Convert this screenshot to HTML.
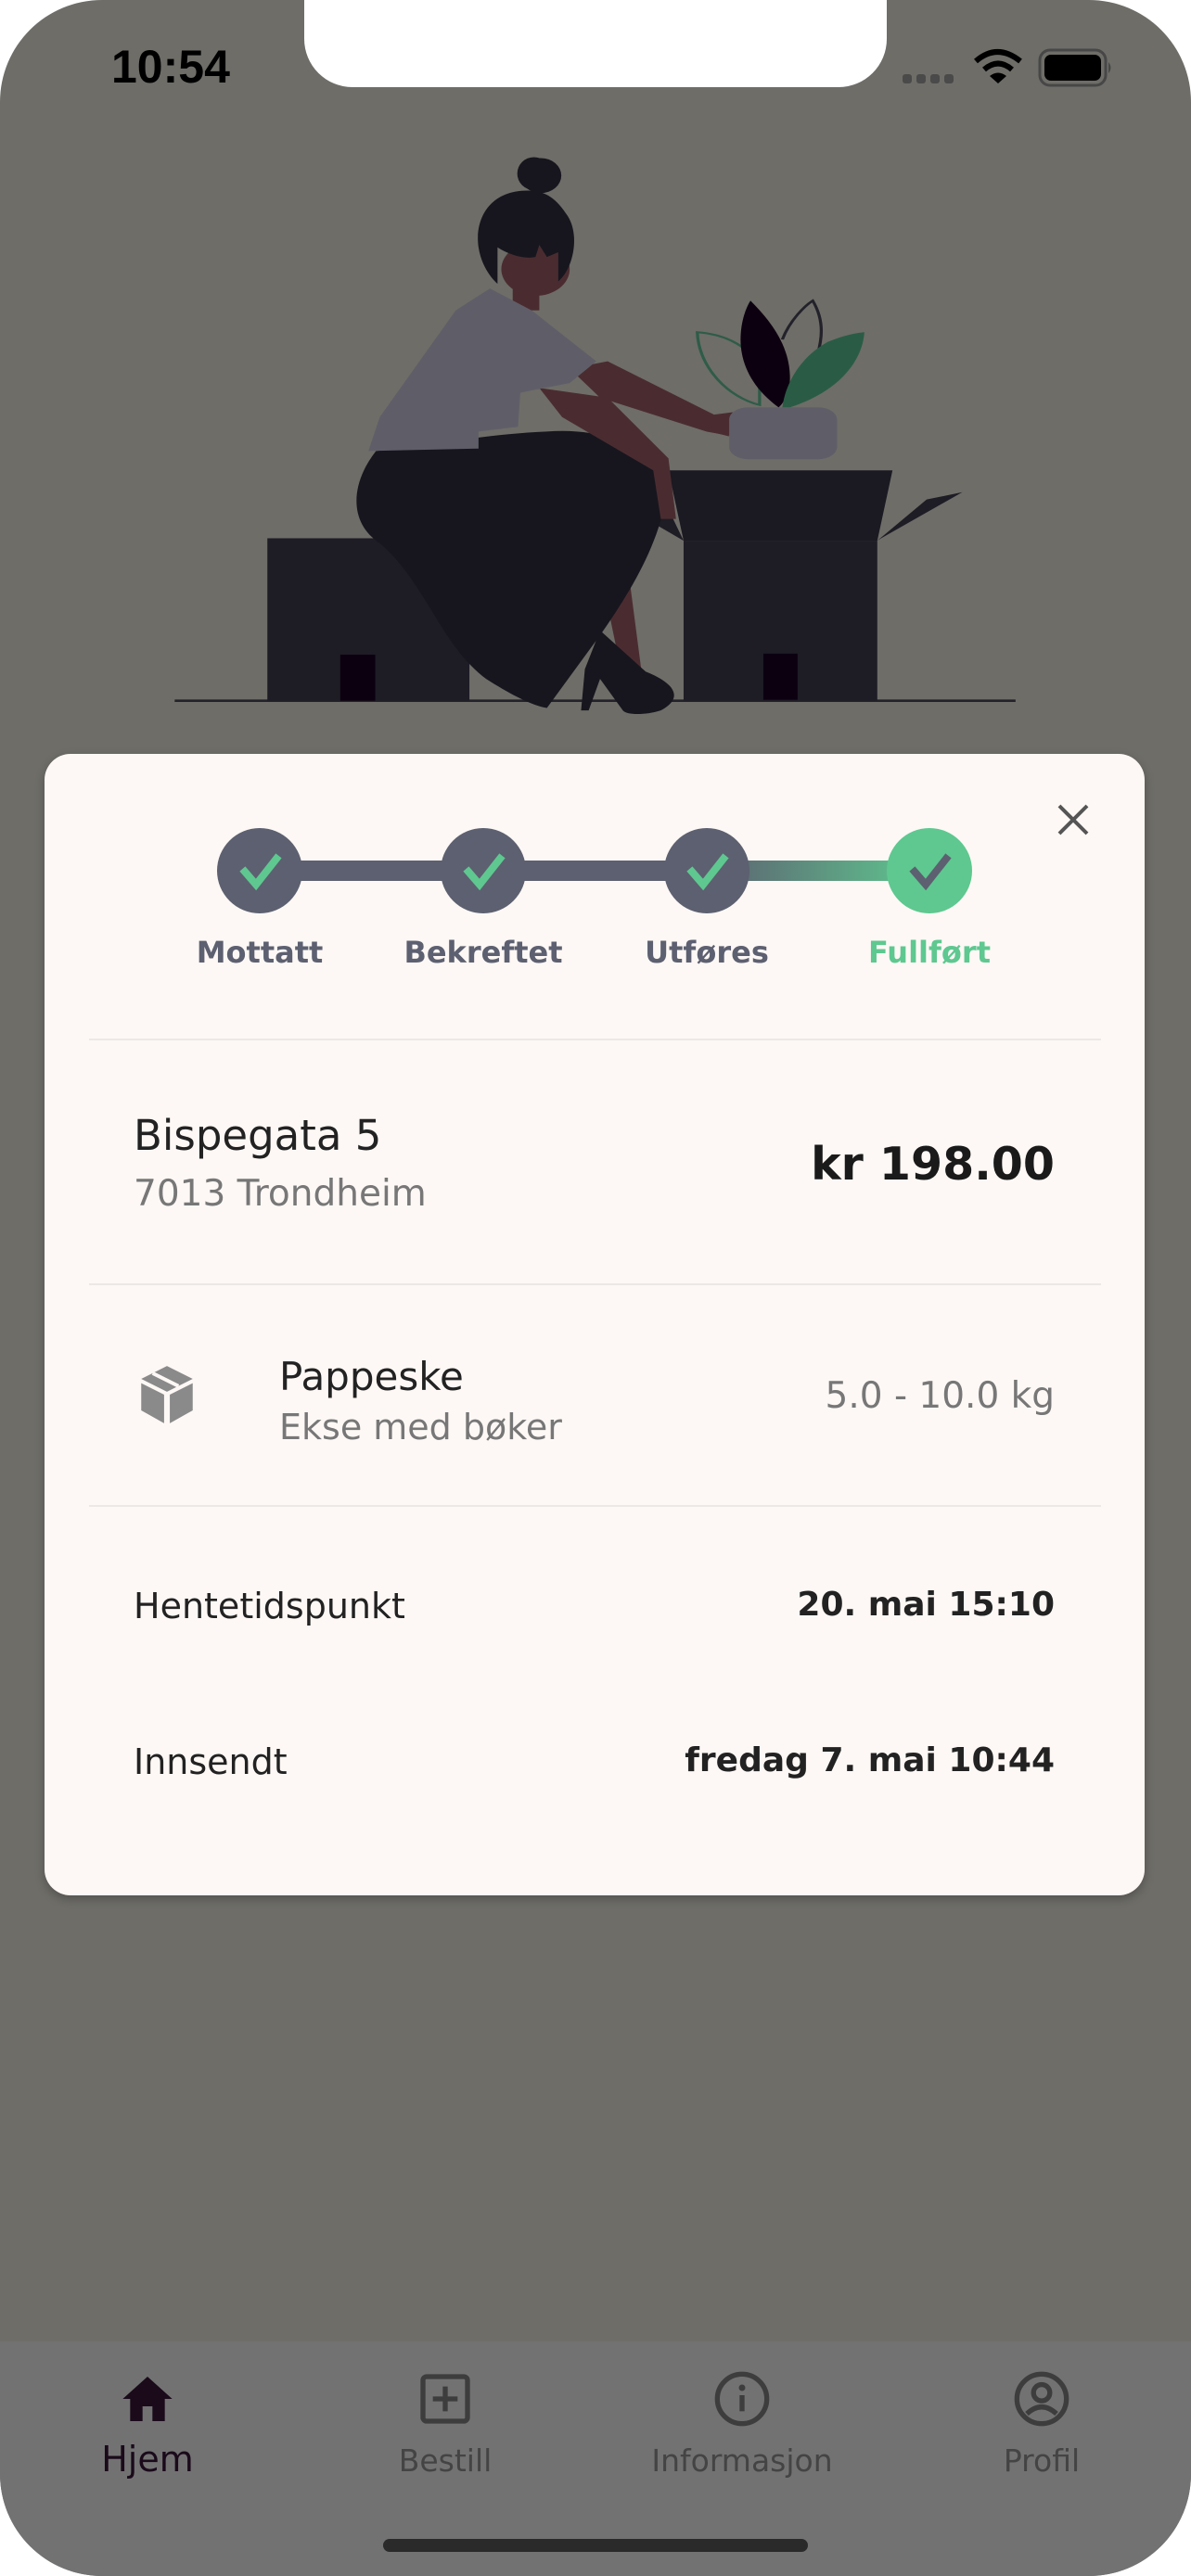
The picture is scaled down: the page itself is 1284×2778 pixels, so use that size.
<!DOCTYPE html>
<html><head><meta charset="utf-8"><style>
*{margin:0;padding:0;box-sizing:border-box}
html,body{width:1284px;height:2778px;background:#fff;overflow:hidden;font-family:"DejaVu Sans",sans-serif}
#screen{position:absolute;left:0;top:0;width:1284px;height:2778px;background:#6e6d68;border-radius:110px;overflow:hidden}
#notch{position:absolute;left:328px;top:-10px;width:628px;height:104px;background:#fff;border-radius:0 0 52px 52px}
.t{position:absolute;white-space:nowrap;line-height:1}
#card{position:absolute;left:48px;top:813px;width:1186px;height:1231px;background:#fdf8f5;border-radius:28px;box-shadow:0 4px 10px rgba(0,0,0,.25)}
.div{position:absolute;left:48px;width:1091px;height:2px;background:#ece8e5}
#tab{position:absolute;left:0;top:2525px;width:1284px;height:253px;background:#727272}
.lab{position:absolute;top:2634px;font-size:33px;color:#444;transform:translateX(-50%)}
.st{font-size:32px;font-weight:bold;color:#5d6070;transform:translateX(-50%);top:198px}
</style></head><body>
<div id="screen">
<div id="notch"></div>
<div class="t" style="left:120px;top:47px;font-size:50px;font-weight:bold;color:#000;font-family:'Liberation Sans',sans-serif">10:54</div>
<svg style="position:absolute;left:960px;top:45px" width="240" height="60" viewBox="960 45 240 60">
<rect x="973" y="80" width="10" height="10" rx="3" fill="#4a4a4a"/><rect x="988" y="80" width="10" height="10" rx="3" fill="#4a4a4a"/><rect x="1003" y="80" width="10" height="10" rx="3" fill="#4a4a4a"/><rect x="1018" y="80" width="10" height="10" rx="3" fill="#4a4a4a"/>
<path d="M1052 66 Q1075 46 1100 66" stroke="#000" stroke-width="6" fill="none"/>
<path d="M1061 75 Q1076 62 1091 75" stroke="#000" stroke-width="6" fill="none"/>
<path d="M1067 82 L1076 90 L1085 82 Q1076 75 1067 82Z" fill="#000"/>
<rect x="1121" y="54" width="71" height="38" rx="11" fill="none" stroke="#474747" stroke-width="3"/>
<rect x="1126" y="59" width="61" height="28" rx="7" fill="#000"/>
<path d="M1195 67 Q1200 73 1195 79Z" fill="#474747"/>
</svg>
<svg style="position:absolute;left:0;top:0" width="1284" height="820" viewBox="0 0 1568 1568" preserveAspectRatio="none">
<line x1="230" y1="1445" x2="1337" y2="1445" stroke="#23212a" stroke-width="5"/>
<rect x="352" y="1110" width="266" height="335" fill="#1e1c25"/>
<rect x="448" y="1350" width="46" height="95" fill="#0c0010"/>
<path d="M790 1015 L880 1050 L900 1115 Z" fill="#1e1c25"/>
<path d="M1155 1115 L1220 1030 L1267 1015 L1160 1110Z" fill="#1e1c25"/>
<rect x="900" y="1115" width="255" height="330" fill="#1e1c25"/>
<path d="M880 970 L1175 970 L1155 1115 L900 1115Z" fill="#1b1922"/>
<rect x="1005" y="1348" width="45" height="95" fill="#0c0010"/>
<path d="M830 1210 L845 1390 L820 1400 L800 1250Z" fill="#4a2c30"/>
<path d="M495 930 C460 1000 460 1080 500 1120 C560 1200 580 1330 640 1400 C670 1430 700 1455 720 1460 L790 1310 C830 1220 870 1120 880 1000 C870 930 800 880 720 890 C640 895 560 920 495 930Z" fill="#17161e"/>
<path d="M790 1300 L850 1385 C890 1410 900 1440 870 1465 C850 1475 825 1475 820 1465 L790 1400 L775 1465 L765 1465 L770 1380Z" fill="#17161e"/>
<path d="M710 800 L800 820 L945 870 L960 900 L935 890 L800 820 L880 945 L890 1070 L870 1070 L860 970 L740 860Z" fill="#4a2c30"/>
<path d="M750 760 L800 745 L940 855 L965 850 L965 900 L930 890 L790 820Z" fill="#4a2c30"/>
<ellipse cx="705" cy="555" rx="45" ry="55" fill="#4a2c30"/>
<rect x="675" y="590" width="35" height="50" fill="#4a2c30"/>
<path d="M645 595 L700 640 L785 745 L750 790 L700 805 L685 810 L682 880 L630 890 L630 925 L485 930 L500 860 L600 640Z" fill="#5f5e68"/>
<ellipse cx="712" cy="362" rx="27" ry="36" fill="#17161e"/>
<ellipse cx="703" cy="358" rx="22" ry="34" fill="#17161e"/>
<path d="M695 393 C640 393 625 460 630 510 C635 560 655 585 655 585 L655 510 C670 525 690 535 705 530 L710 505 L720 530 L735 520 L735 580 C755 555 765 480 745 440 C730 405 715 393 695 393Z" fill="#17161e"/>
<rect x="960" y="840" width="142" height="107" rx="25" fill="#5f5e68"/>
<path d="M918 685 C960 690 990 720 1000 760 L1000 835 C960 820 920 760 918 685Z" fill="none" stroke="#2e5c48" stroke-width="4"/>
<path d="M1030 700 C1040 660 1060 630 1070 620 C1085 660 1085 700 1070 760" fill="none" stroke="#23212a" stroke-width="4"/>
<path d="M988 620 C1020 670 1040 720 1040 780 C1040 810 1030 835 1025 840 C990 800 975 750 975 700 C975 670 980 640 988 620Z" fill="#0c0010"/>
<path d="M1138 685 C1135 750 1100 810 1040 840 L1030 840 C1035 780 1060 730 1090 705 C1105 695 1120 688 1138 685Z" fill="#2a5c45"/>
</svg>
<div id="card">
<svg style="position:absolute;left:0;top:0" width="1186" height="200" viewBox="48 813 1186 200">
<defs><linearGradient id="g" x1="0" x2="1"><stop offset="0" stop-color="#5d6070"/><stop offset="1" stop-color="#5ec890"/></linearGradient></defs>
<rect x="280" y="928" width="482" height="22" fill="#5d6070"/>
<rect x="762" y="928" width="240" height="22" fill="url(#g)"/>
<circle cx="280" cy="939" r="46" fill="#5d6070"/><circle cx="521" cy="939" r="46" fill="#5d6070"/><circle cx="762" cy="939" r="46" fill="#5d6070"/><circle cx="1002" cy="939" r="46" fill="#5ec890"/>
<g fill="none" stroke-width="8" stroke-linecap="square"><path d="M264 940 L276 954 L298 926" stroke="#5ec890"/><path d="M505 940 L517 954 L539 926" stroke="#5ec890"/><path d="M746 940 L758 954 L780 926" stroke="#5ec890"/><path d="M986 940 L998 954 L1020 926" stroke="#5d6070"/></g>
<path d="M1142 869 L1172 899 M1172 869 L1142 899" stroke="#555" stroke-width="4"/>
</svg>
<div class="t st" style="left:232px">Mottatt</div>
<div class="t st" style="left:473px">Bekreftet</div>
<div class="t st" style="left:714px">Utføres</div>
<div class="t st" style="left:954px;color:#5ec890">Fullført</div>
<div class="div" style="top:307px"></div>
<div class="t" style="left:96px;top:389px;font-size:45px;color:#222">Bispegata 5</div>
<div class="t" style="left:96px;top:455px;font-size:39px;color:#777">7013 Trondheim</div>
<div class="t" style="right:97px;top:418px;font-size:49px;font-weight:bold;color:#1a1a1a">kr 198.00</div>
<div class="div" style="top:571px"></div>
<svg style="position:absolute;left:95px;top:654px" width="74" height="74" viewBox="0 0 24 24"><path d="M12 2 L21 6.5 L12 11 L3 6.5Z" fill="#8a8a8a"/><path d="M3 8 L11 12 L11 22 L3 17.5Z M21 8 L13 12 L13 22 L21 17.5Z" fill="#8a8a8a"/><path d="M7 4.5 L16 9" stroke="#fdf8f5" stroke-width="1.3"/></svg>
<div class="t" style="left:253px;top:651px;font-size:42px;color:#222">Pappeske</div>
<div class="t" style="left:253px;top:707px;font-size:38px;color:#777">Ekse med bøker</div>
<div class="t" style="right:97px;top:673px;font-size:39px;color:#777">5.0 - 10.0 kg</div>
<div class="div" style="top:810px"></div>
<div class="t" style="left:96px;top:900px;font-size:38px;color:#222">Hentetidspunkt</div>
<div class="t" style="right:97px;top:900px;font-size:36px;font-weight:bold;color:#222">20. mai 15:10</div>
<div class="t" style="left:96px;top:1068px;font-size:38px;color:#222">Innsendt</div>
<div class="t" style="right:97px;top:1068px;font-size:36px;font-weight:bold;color:#222">fredag 7. mai 10:44</div>
</div>
<div id="tab"></div>
<svg style="position:absolute;left:127px;top:2555px" width="64" height="64" viewBox="0 0 24 24"><path d="M12 3 L2 12 L5 12 L5 21 L10 21 L10 15 L14 15 L14 21 L19 21 L19 12 L22 12Z" fill="#1a0a1a"/></svg>
<svg style="position:absolute;left:448px;top:2555px" width="64" height="64" viewBox="0 0 24 24"><rect x="3" y="3" width="18" height="18" rx="1.5" fill="none" stroke="#3d3d3d" stroke-width="2"/><path d="M12 7 V17 M7 12 H17" stroke="#3d3d3d" stroke-width="2"/></svg>
<svg style="position:absolute;left:768px;top:2555px" width="64" height="64" viewBox="0 0 24 24"><circle cx="12" cy="12" r="10" fill="none" stroke="#3d3d3d" stroke-width="2"/><path d="M12 10.5 V17" stroke="#3d3d3d" stroke-width="2"/><circle cx="12" cy="7.5" r="1.3" fill="#3d3d3d"/></svg>
<svg style="position:absolute;left:1091px;top:2555px" width="64" height="64" viewBox="0 0 24 24"><circle cx="12" cy="12" r="10" fill="none" stroke="#3d3d3d" stroke-width="2"/><circle cx="12" cy="9.5" r="3.3" fill="none" stroke="#3d3d3d" stroke-width="2"/><path d="M6 18 Q12 12.5 18 18" fill="none" stroke="#3d3d3d" stroke-width="2"/></svg>
<div class="lab" style="left:159px;top:2630px;font-size:38px;color:#1a0a1a">Hjem</div>
<div class="lab" style="left:480px">Bestill</div>
<div class="lab" style="left:800px">Informasjon</div>
<div class="lab" style="left:1123px">Profil</div>
<div style="position:absolute;left:413px;top:2738px;width:458px;height:14px;border-radius:7px;background:#2a2a2a"></div>
</div>
</body></html>
